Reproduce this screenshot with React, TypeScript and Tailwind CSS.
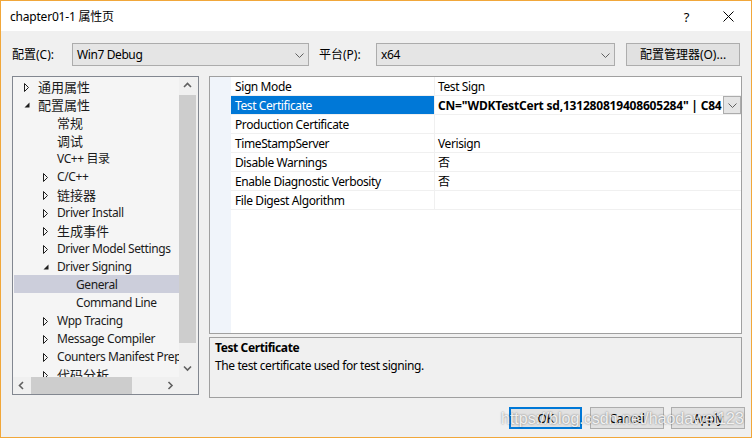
import React from 'react';

const FONT = "font-['Noto_Sans','Noto_Sans_CJK_SC',sans-serif]";

function ChevronDown() {
  return (
    <svg width="9" height="5" viewBox="0 0 9 5">
      <polyline points="0.5,0.5 4.5,4.5 8.5,0.5" fill="none" stroke="#606060" strokeWidth="1" />
    </svg>
  );
}

function ScrollArrow({ dir }: { dir: 'up' | 'down' | 'left' | 'right' }) {
  const pts: Record<string, string> = {
    up: '1,5 4.5,1.5 8,5',
    down: '1,1.5 4.5,5 8,1.5',
    left: '5,1 1.5,4.5 5,8',
    right: '1.5,1 5,4.5 1.5,8',
  };
  const vertical = dir === 'up' || dir === 'down';
  return (
    <svg width={vertical ? 9 : 7} height={vertical ? 7 : 9} viewBox={vertical ? '0 0 9 7' : '0 0 7 9'}>
      <polyline points={pts[dir]} fill="none" stroke="#606060" strokeWidth="1.6" />
    </svg>
  );
}

function Collapsed() {
  return (
    <svg width="6" height="9" viewBox="0 0 6 9">
      <polygon points="0.5,0.5 4.5,4.5 0.5,8.5" fill="none" stroke="#1e1e1e" strokeWidth="1" />
    </svg>
  );
}

function Expanded() {
  return (
    <svg width="6" height="6" viewBox="0 0 6 6">
      <polygon points="5.5,0.5 5.5,5.5 0.5,5.5" fill="#1e1e1e" />
    </svg>
  );
}

type Node = { t: string; l: number; a?: 'c' | 'e'; sel?: boolean; cjk?: boolean };

const tree: Node[] = [
  { t: '通用属性', l: 0, a: 'c', cjk: true },
  { t: '配置属性', l: 0, a: 'e', cjk: true },
  { t: '常规', l: 1, cjk: true },
  { t: '调试', l: 1, cjk: true },
  { t: 'VC++ 目录', l: 1 },
  { t: 'C/C++', l: 1, a: 'c' },
  { t: '链接器', l: 1, a: 'c', cjk: true },
  { t: 'Driver Install', l: 1, a: 'c' },
  { t: '生成事件', l: 1, a: 'c', cjk: true },
  { t: 'Driver Model Settings', l: 1, a: 'c' },
  { t: 'Driver Signing', l: 1, a: 'e' },
  { t: 'General', l: 2, sel: true },
  { t: 'Command Line', l: 2 },
  { t: 'Wpp Tracing', l: 1, a: 'c' },
  { t: 'Message Compiler', l: 1, a: 'c' },
  { t: 'Counters Manifest Preprocessor', l: 1, a: 'c' },
  { t: '代码分析', l: 1, a: 'c', cjk: true },
];

const indent = ['pl-[11px]', 'pl-[30px]', 'pl-[49px]'];

const props: { n: string; v: string; sel?: boolean }[] = [
  { n: 'Sign Mode', v: 'Test Sign' },
  { n: 'Test Certificate', v: 'CN="WDKTestCert sd,131280819408605284" | C84', sel: true },
  { n: 'Production Certificate', v: '' },
  { n: 'TimeStampServer', v: 'Verisign' },
  { n: 'Disable Warnings', v: '否' },
  { n: 'Enable Diagnostic Verbosity', v: '否' },
  { n: 'File Digest Algorithm', v: '' },
];

export default function App() {
  return (
    <div
      className={`${FONT} relative flex h-[438px] w-[752px] flex-col overflow-hidden border border-[#f1a73a] bg-[#f0f0f0] text-[12px] leading-[16px] tracking-[-0.4px] text-black`}
    >
      {/* Title bar */}
      <div className="flex h-[30px] items-center bg-white pl-[9px] pt-[1px]">
        <span className="tracking-[-0.2px]">chapter01-1 属性页</span>
        <span className="ml-auto mr-[34px] text-[13px]">?</span>
        <svg width="11" height="11" viewBox="0 0 11 11" className="mr-[17px]">
          <line x1="0.5" y1="0.5" x2="10.5" y2="10.5" stroke="#000" strokeWidth="1" />
          <line x1="10.5" y1="0.5" x2="0.5" y2="10.5" stroke="#000" strokeWidth="1" />
        </svg>
      </div>

      {/* Body */}
      <div className="flex flex-1 flex-col pl-[11px] pt-[12px]">
        {/* Config row */}
        <div className="flex h-[23px] items-center">
          <span className="w-[60px] pt-[1px] tracking-normal">配置(C):</span>
          <div className="flex h-[23px] w-[237px] items-center border border-[#acacac] bg-[#e5e5e5] pl-[4px] pr-[4px] pt-[1px]">
            <span>Win7 Debug</span>
            <span className="ml-auto flex"><ChevronDown /></span>
          </div>
          <span className="ml-[10px] w-[57px] pt-[1px] tracking-normal">平台(P):</span>
          <div className="flex h-[23px] w-[239px] items-center border border-[#acacac] bg-[#e5e5e5] pl-[4px] pr-[4px] pt-[1px]">
            <span>x64</span>
            <span className="ml-auto flex"><ChevronDown /></span>
          </div>
          <div className="ml-[11px] flex h-[23px] w-[114px] items-center justify-center border border-[#adadad] bg-[#e1e1e1] pt-[1px] tracking-normal">
            配置管理器(O)...
          </div>
        </div>

        {/* Main */}
        <div className="mt-[10px] flex items-start gap-[10px]">
          {/* Tree */}
          <div className="flex h-[319px] w-[187px] flex-col border border-[#828790] bg-[#f0f0f0]">
            <div className="flex h-[300px]">
              <div className="w-[166px] overflow-hidden bg-[#f5f5f5] text-[#1b1b1b]">
                {tree.map((n, i) => (
                  <div
                    key={i}
                    className={`flex h-[18px] items-center whitespace-nowrap pt-[2px] ${indent[n.l]} ${n.sel ? 'ml-[1px] bg-[#cccedb]' : ''}`}
                  >
                    <span className={`flex w-[14px] shrink-0 items-center ${n.sel ? '-ml-[1px]' : ''}`}>
                      {n.a === 'c' ? <Collapsed /> : n.a === 'e' ? <Expanded /> : null}
                    </span>
                    <span className={n.cjk ? 'text-[13px] tracking-normal' : ''}>{n.t}</span>
                  </div>
                ))}
              </div>
              <div className="flex w-[17px] flex-col bg-[#f0f0f0]">
                <div className="flex h-[17px] items-center justify-center"><ScrollArrow dir="up" /></div>
                <div className="mt-[1px] h-[248px] bg-[#cdcdcd]" />
                <div className="h-[17px]" />
                <div className="flex h-[17px] items-center justify-center"><ScrollArrow dir="down" /></div>
              </div>
            </div>
            <div className="flex h-[17px]">
              <div className="flex w-[166px] bg-[#f0f0f0]">
                <div className="flex w-[17px] items-center justify-center"><ScrollArrow dir="left" /></div>
                <div className="ml-[1px] w-[101px] bg-[#cdcdcd]" />
                <div className="w-[30px]" />
                <div className="flex w-[17px] items-center justify-center"><ScrollArrow dir="right" /></div>
              </div>
              <div className="w-[17px] bg-[#f0f0f0]" />
            </div>
          </div>

          {/* Right column */}
          <div className="flex w-[533px] flex-col">
            <div className="flex h-[258px] border border-[#a0a0a0] bg-white">
              <div className="w-[21px] bg-[#f0f4fa]" />
              <div className="flex-1">
                {props.map((p, i) => (
                  <div key={i} className="grid h-[19px] grid-cols-[203px_307px] border-b border-[#f0f0f0]">
                    <div
                      className={`flex items-center whitespace-nowrap pl-[4px] pt-[2px] ${p.sel ? 'bg-[#0078d7] text-white' : ''}`}
                    >
                      {p.n}
                    </div>
                    <div className="flex items-center overflow-hidden whitespace-nowrap border-l border-[#f0f0f0] pl-[3px]">
                      {p.sel ? (
                        <>
                          <span className="w-[285px] overflow-hidden pt-[2px] font-bold tracking-[-0.2px]">{p.v}</span>
                          <div className="flex h-[18px] w-[18px] shrink-0 items-center justify-center border border-[#acacac] bg-[#e5e5e5]">
                            <ChevronDown />
                          </div>
                        </>
                      ) : (
                        <span className="pt-[2px]">{p.v}</span>
                      )}
                    </div>
                  </div>
                ))}
              </div>
            </div>
            <div className="mt-[3px] h-[61px] border border-[#a0a0a0] bg-[#f0f0f0] pl-[5px] pt-[1px] leading-[18px]">
              <div className="font-bold">Test Certificate</div>
              <div>The test certificate used for test signing.</div>
            </div>
          </div>
        </div>

        {/* Buttons */}
        <div className="mt-[9px] flex justify-end pr-[6px]">
          <div className="flex h-[22px] w-[73px] items-center justify-center border-2 border-[#0078d7] bg-[#e1e1e1] pt-[1px]">OK</div>
          <div className="ml-[8px] flex h-[22px] w-[74px] items-center justify-center border border-[#adadad] bg-[#e1e1e1] pt-[1px]">Cancel</div>
          <div className="ml-[7px] flex h-[22px] w-[74px] items-center justify-center border border-[#adadad] bg-[#e1e1e1] pt-[1px]">Apply</div>
        </div>
      </div>

      {/* Watermark */}
      <div className="pointer-events-none absolute left-[500px] top-[408px] whitespace-nowrap font-['Liberation_Sans',sans-serif] text-[16px] leading-[20px] tracking-normal text-white/85 [text-shadow:0_0_2px_rgba(0,0,0,0.55)]">
        https://blog.csdn.net/haodawei123
      </div>
    </div>
  );
}
